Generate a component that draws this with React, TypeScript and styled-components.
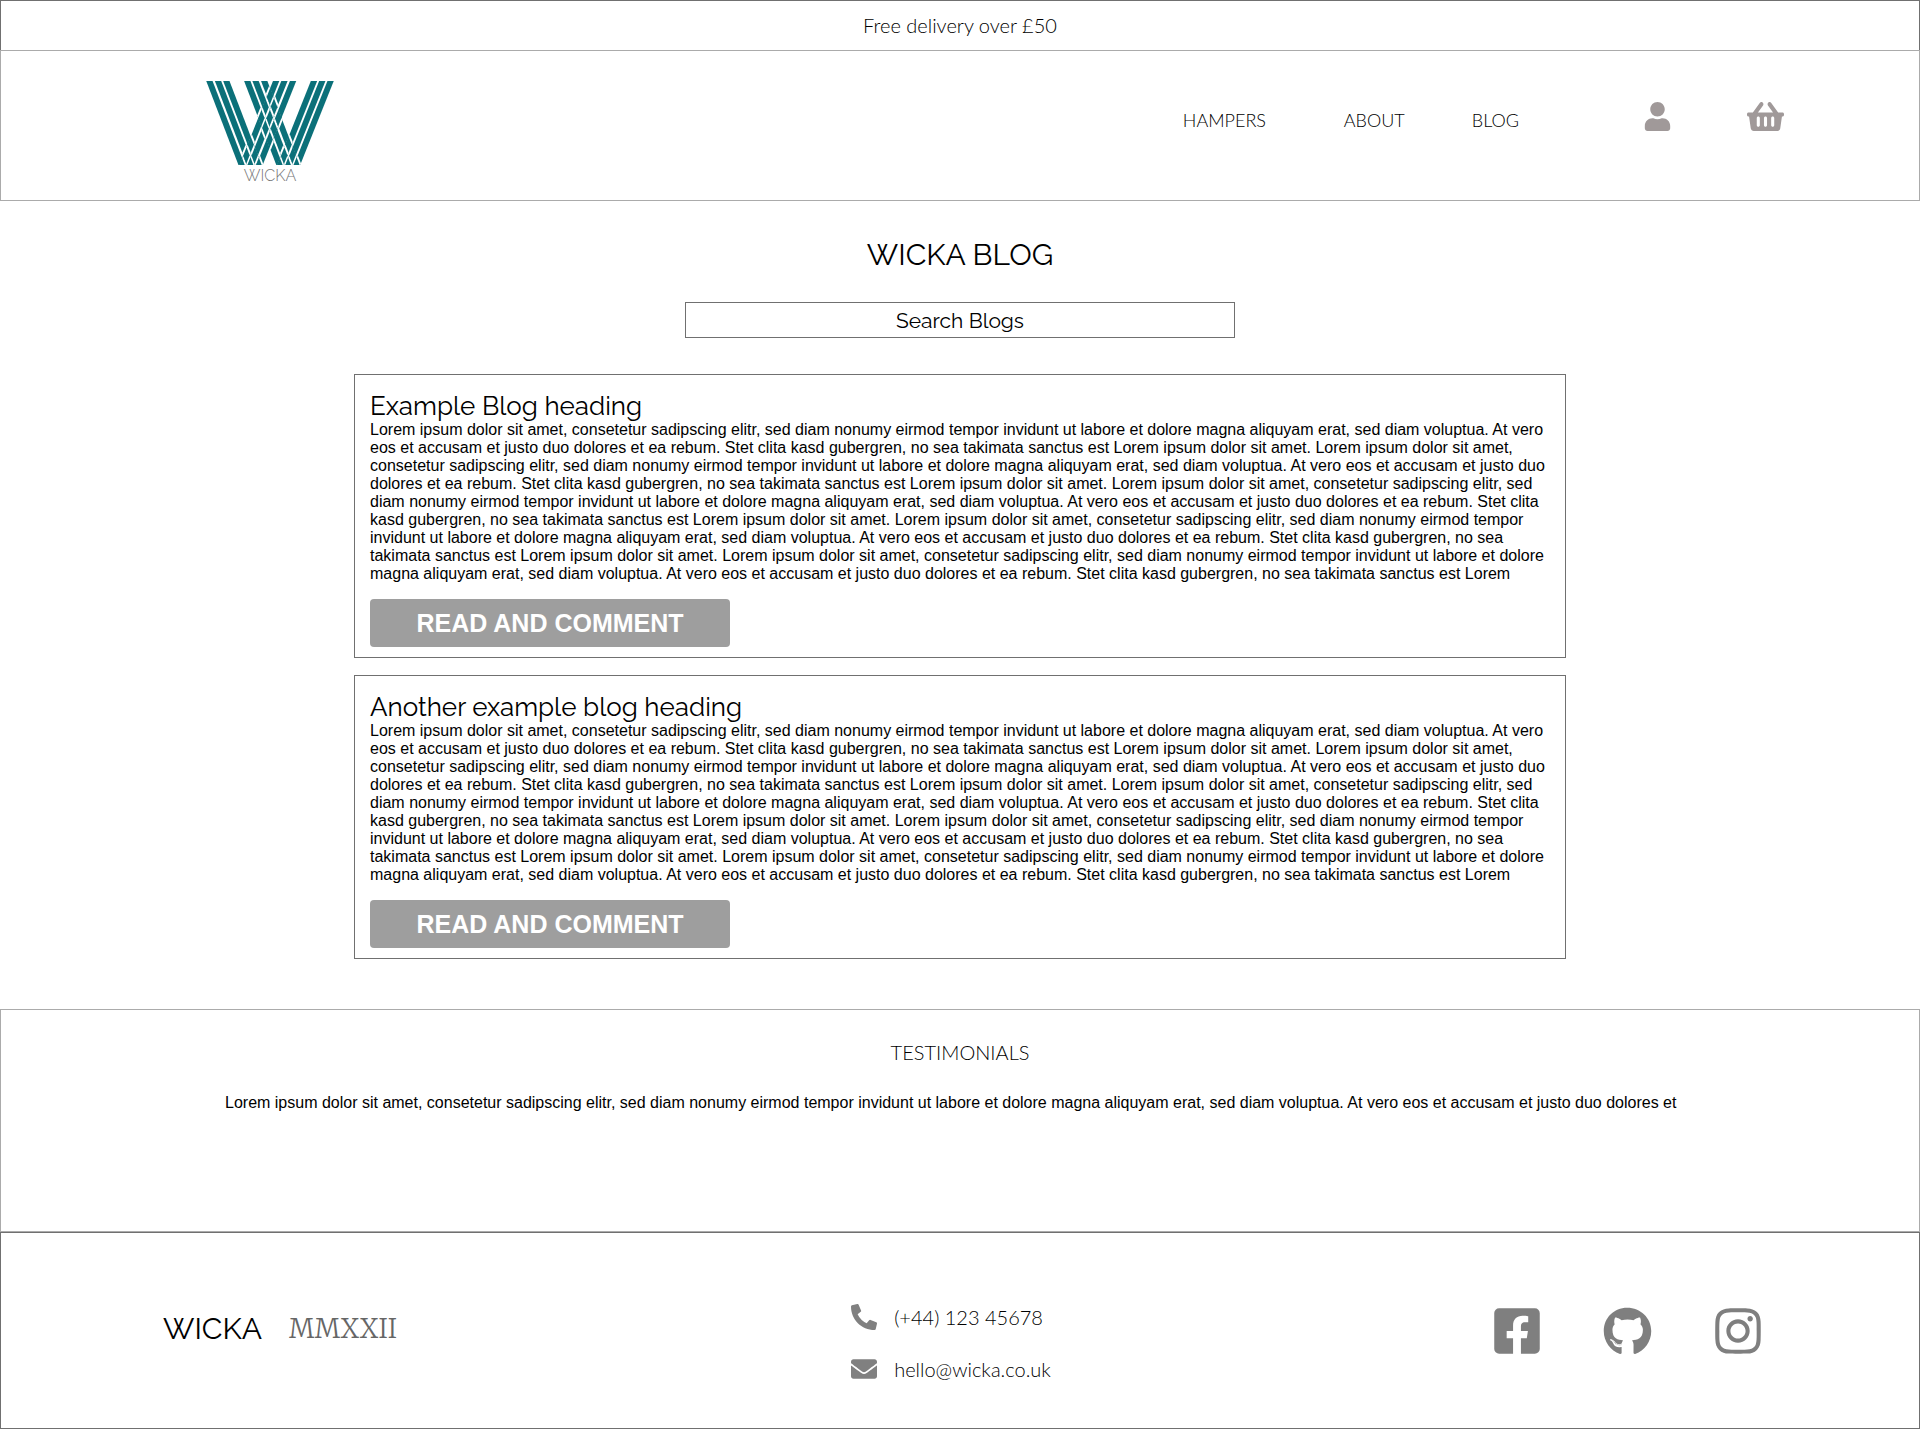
import React from "react";
import styled, { createGlobalStyle } from "styled-components";
import {
  FaUser,
  FaShoppingBasket,
  FaPhoneAlt,
  FaEnvelope,
  FaFacebookSquare,
  FaGithub,
  FaInstagram,
} from "react-icons/fa";

const GlobalStyle = createGlobalStyle`
  *, *::before, *::after { box-sizing: border-box; }
  body {
    margin: 0;
    background: #fff;
    color: #000;
    font-family: "Liberation Sans", Arial, sans-serif;
    font-size: 16px;
    line-height: 18px;
  }
  h1, h2, p { margin: 0; font-weight: 400; }
  a { color: inherit; text-decoration: none; }
`;

const display = `"Raleway", "Lato", sans-serif`;
const light = `"Lato", sans-serif`;

const Page = styled.div`
  display: flex;
  flex-direction: column;
`;

const Announcement = styled.p`
  padding: 12px 0 13px;
  border: 1px solid #707070;
  border-bottom: 0;
  font: 300 20px/24px ${light};
  text-align: center;
`;

const Header = styled.header`
  display: flex;
  align-items: center;
  justify-content: space-between;
  padding: 30px 135px 15px 205px;
  border: 1px solid #ababab;
`;

const LogoLink = styled.a`
  display: flex;
  flex-direction: column;
  align-items: center;
  gap: 2px;
  color: #777;
  font: 300 16px/18px ${display};
`;

const Nav = styled.nav`
  display: flex;
  align-items: center;
  margin-bottom: 34px;
  font: 300 18px/24px ${light};
`;

const NavLinks = styled.div`
  display: grid;
  grid-template-columns: 161px 128px auto;
  margin-right: 124px;
  padding-top: 8px;
`;

const NavIcons = styled.div`
  display: flex;
  align-items: center;
  gap: 75px;
`;

const IconLink = styled.a<{ $size: number; $tone: string }>`
  display: flex;
  color: ${(p) => p.$tone};
  font-size: ${(p) => p.$size}px;
`;

const Main = styled.main`
  display: flex;
  flex-direction: column;
  align-items: center;
  padding: 36px 24px 50px;
`;

const Title = styled.h1`
  font: 400 30px/36px ${display};
`;

const Search = styled.input`
  width: 550px;
  max-width: 100%;
  height: 36px;
  margin: 29px 0 36px;
  padding: 0 12px;
  border: 1px solid #707070;
  background: #fff;
  font: 400 21px/24px ${display};
  text-align: center;
  &::placeholder { color: #000; opacity: 1; }
`;

const Posts = styled.div`
  display: flex;
  flex-direction: column;
  gap: 17px;
  width: 100%;
  max-width: 1212px;
`;

const Card = styled.article`
  display: flex;
  flex-direction: column;
  align-items: flex-start;
  padding: 16px 15px 10px;
  border: 1px solid #707070;
`;

const CardTitle = styled.h2`
  font: 400 26px/30px ${display};
`;

const ReadButton = styled.button`
  width: 360px;
  max-width: 100%;
  height: 48px;
  margin-top: 16px;
  padding: 0;
  border: 0;
  border-radius: 4px;
  background: #9e9e9e;
  color: #fff;
  font: 700 25px/28px "Liberation Sans", Arial, sans-serif;
`;

const Testimonials = styled.section`
  padding: 30px 224px 119px;
  border: 1px solid #ababab;
`;

const SectionTitle = styled.h2`
  margin-bottom: 30px;
  font: 300 20px/24px ${light};
  text-align: center;
`;

const Footer = styled.footer`
  display: grid;
  grid-template-columns: 1fr auto 1fr;
  align-items: center;
  padding: 71px 155px 46px 162px;
  border: 1px solid #707070;
`;

const Brand = styled.div`
  display: flex;
  align-items: center;
  gap: 27px;
  margin-bottom: 28px;
  font: 400 30px/36px ${display};
`;

const Year = styled.span`
  color: #666;
  font: 300 26px/36px "Merriweather", "Liberation Serif", serif;
`;

const Contact = styled.div`
  display: flex;
  flex-direction: column;
  gap: 26px;
  padding-right: 25px;
  font: 300 20px/26px ${light};
`;

const ContactLink = styled.a`
  display: flex;
  align-items: center;
  gap: 17px;
  svg { color: #808080; font-size: 26px; }
`;

const Socials = styled.div`
  display: flex;
  align-items: center;
  justify-content: flex-end;
  gap: 60px;
  margin-bottom: 24px;
`;

// Geometry of the woven W: three-strand ribbons leaning either way.
const W = 19;
const GAP = 6;
const H = 253;
const FALL = 97 / H;
const RISE = 101 / H;
const falling = [0, 26, 51, 114, 139, 165];
const rising = [201, 226, 252, 315, 340, 365];

const meet = (p: number, q: number) => {
  const y = (q - p) / (FALL + RISE);
  return `${p + FALL * y},${y}`;
};
const rhombus = (p0: number, p1: number, q0: number, q1: number) =>
  [meet(p0, q0), meet(p1, q0), meet(p1, q1), meet(p0, q1)].join(" ");
const strand = (x: number, lean: number) => {
  const end = x + lean * H;
  return `${x},0 ${x + W},0 ${end + W},${H} ${end},${H}`;
};

const WovenMark = () => (
  <svg width="128" height="84" viewBox={`0 0 384 ${H}`} aria-hidden="true">
    <g fill="#0b7079">
      {falling.map((x) => <polygon key={`f${x}`} points={strand(x, FALL)} />)}
      {rising.map((x) => <polygon key={`r${x}`} points={strand(x, -RISE)} />)}
    </g>
    {falling.map((p, i) =>
      rising.map((q, j) => {
        const risingOnTop = (i + j) % 2 === 1;
        const halo = risingOnTop
          ? rhombus(p, p + W, q - GAP, q + W + GAP)
          : rhombus(p - GAP, p + W + GAP, q, q + W);
        const over = risingOnTop
          ? rhombus(p - 1, p + W + 1, q, q + W)
          : rhombus(p, p + W, q - 1, q + W + 1);
        return (
          <g key={`${i}-${j}`}>
            <polygon points={halo} fill="#fff" />
            <polygon points={over} fill="#0b7079" />
          </g>
        );
      })
    )}
  </svg>
);

const lorem =
  "Lorem ipsum dolor sit amet, consetetur sadipscing elitr, sed diam nonumy eirmod tempor invidunt ut labore et dolore magna aliquyam erat, sed diam voluptua. At vero eos et accusam et justo duo dolores et";
const passage = `${lorem} ea rebum. Stet clita kasd gubergren, no sea takimata sanctus est Lorem`;
const excerpt = Array(5).fill(passage).join(" ipsum dolor sit amet. ");

const posts = ["Example Blog heading", "Another example blog heading"];

export default function App() {
  return (
    <Page>
      <GlobalStyle />
      <Announcement>Free delivery over £50</Announcement>
      <Header>
        <LogoLink href="#home">
          <WovenMark />
          WICKA
        </LogoLink>
        <Nav aria-label="Main">
          <NavLinks>
            <a href="#hampers">HAMPERS</a>
            <a href="#about">ABOUT</a>
            <a href="#blog">BLOG</a>
          </NavLinks>
          <NavIcons>
            <IconLink href="#account" aria-label="Account" $size={29} $tone="#a09999">
              <FaUser />
            </IconLink>
            <IconLink href="#basket" aria-label="Basket" $size={37} $tone="#a09999">
              <FaShoppingBasket />
            </IconLink>
          </NavIcons>
        </Nav>
      </Header>
      <Main>
        <Title>WICKA BLOG</Title>
        <Search type="text" aria-label="Search Blogs" placeholder="Search Blogs" />
        <Posts>
          {posts.map((title) => (
            <Card key={title}>
              <CardTitle>{title}</CardTitle>
              <p>{excerpt}</p>
              <ReadButton type="button">READ AND COMMENT</ReadButton>
            </Card>
          ))}
        </Posts>
      </Main>
      <Testimonials>
        <SectionTitle>TESTIMONIALS</SectionTitle>
        <p>{lorem}</p>
      </Testimonials>
      <Footer>
        <Brand>
          WICKA <Year>MMXXII</Year>
        </Brand>
        <Contact>
          <ContactLink href="tel:+4412345678">
            <FaPhoneAlt />
            (+44) 123 45678
          </ContactLink>
          <ContactLink href="mailto:hello@wicka.co.uk">
            <FaEnvelope />
            hello@wicka.co.uk
          </ContactLink>
        </Contact>
        <Socials>
          <IconLink href="#facebook" aria-label="Facebook" $size={52} $tone="#7f7f7f">
            <FaFacebookSquare />
          </IconLink>
          <IconLink href="#github" aria-label="GitHub" $size={49} $tone="#7f7f7f">
            <FaGithub />
          </IconLink>
          <IconLink href="#instagram" aria-label="Instagram" $size={52} $tone="#7f7f7f">
            <FaInstagram />
          </IconLink>
        </Socials>
      </Footer>
    </Page>
  );
}
